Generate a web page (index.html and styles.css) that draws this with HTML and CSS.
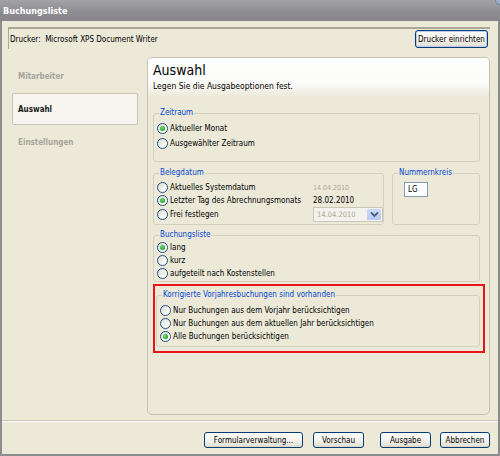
FILE: index.html
```html
<!DOCTYPE html>
<html lang="de">
<head>
<meta charset="utf-8">
<title>Buchungsliste</title>
<link rel="stylesheet" href="styles.css">
</head>
<body>
<div class="window">
  <div class="titlebar"><span class="title">Buchungsliste</span><span class="corner"></span></div>
  <div class="frame">
    <div class="printer-bar">
      <span class="printer-label">Drucker:&nbsp;&nbsp;Microsoft XPS Document Writer</span>
      <button class="btn btn-setup">Drucker einrichten</button>
    </div>
    <div class="main">
      <nav class="nav">
        <div class="nav-item">Mitarbeiter</div>
        <div class="nav-item active">Auswahl</div>
        <div class="nav-item">Einstellungen</div>
      </nav>
      <section class="panel">
        <header class="panel-head">
          <h1>Auswahl</h1>
          <p>Legen Sie die Ausgabeoptionen fest.</p>
        </header>
        <div class="panel-body">
          <fieldset class="group g-zeitraum">
            <legend>Zeitraum</legend>
            <div class="opt"><span class="radio on"></span>Aktueller Monat</div>
            <div class="opt"><span class="radio"></span>Ausgewählter Zeitraum</div>
          </fieldset>

          <div class="split">
            <fieldset class="group g-beleg">
              <legend>Belegdatum</legend>
              <div class="dates">
                <div class="opt"><span class="radio"></span>Aktuelles Systemdatum</div>
                <div class="date dim">14.04.2010</div>
                <div class="opt"><span class="radio on"></span>Letzter Tag des Abrechnungsmonats</div>
                <div class="date">28.02.2010</div>
                <div class="opt"><span class="radio"></span>Frei festlegen</div>
                <div class="combo">
                  <span class="combo-text">14.04.2010</span>
                  <span class="combo-btn"><svg width="9" height="7" viewBox="0 0 9 7"><path d="M1 1.5 L4.5 5 L8 1.5" fill="none" stroke="#4d6185" stroke-width="1.8"/></svg></span>
                </div>
              </div>
            </fieldset>
            <fieldset class="group g-nummer">
              <legend>Nummernkreis</legend>
              <div class="textbox">LG</div>
            </fieldset>
          </div>

          <fieldset class="group g-liste">
            <legend>Buchungsliste</legend>
            <div class="opt"><span class="radio on"></span>lang</div>
            <div class="opt"><span class="radio"></span>kurz</div>
            <div class="opt"><span class="radio"></span>aufgeteilt nach Kostenstellen</div>
          </fieldset>

          <div class="highlight">
            <fieldset class="group g-korr">
              <legend>Korrigierte Vorjahresbuchungen sind vorhanden</legend>
              <div class="opt"><span class="radio"></span>Nur Buchungen aus dem Vorjahr berücksichtigen</div>
              <div class="opt"><span class="radio"></span>Nur Buchungen aus dem aktuellen Jahr berücksichtigen</div>
              <div class="opt"><span class="radio on"></span>Alle Buchungen berücksichtigen</div>
            </fieldset>
          </div>
        </div>
      </section>
    </div>
    <div class="footer">
      <button class="btn b-form">Formularverwaltung...</button>
      <button class="btn b-vor">Vorschau</button>
      <button class="btn b-aus">Ausgabe</button>
      <button class="btn b-abb">Abbrechen</button>
    </div>
  </div>
</div>
</body>
</html>
```

FILE: styles.css
```css
* { box-sizing: border-box; }
html, body { margin: 0; padding: 0; }
body {
  width: 500px;
  height: 456px;
  overflow: hidden;
  background: #ece9d8;
  font-family: "DejaVu Sans Condensed", "DejaVu Sans", sans-serif;
  font-stretch: condensed;
  font-size: 8px;
  color: #000;
}
.window { width: 500px; height: 456px; display: flex; flex-direction: column; }

.titlebar {
  height: 21px;
  flex: none;
  display: flex;
  align-items: center;
  justify-content: space-between;
  padding-left: 3px;
  background: linear-gradient(#a3a3a7, #8d8d91 60%, #86868a);
  color: #fff;
  font-family: "DejaVu Sans", sans-serif;
  font-stretch: condensed;
  font-weight: bold;
  font-size: 9px;
  position: relative;
}
.corner {
  position: absolute;
  right: -4px;
  top: -4px;
  width: 9px;
  height: 9px;
  border-radius: 50%;
  background: #9fb0c8;
  border: 1px solid #6f7f98;
}

.frame {
  flex: 1;
  display: flex;
  flex-direction: column;
  border: 2px solid #8c8c8c;
  border-top: 0;
}

.printer-bar {
  flex: none;
  margin: 6px 8px 0 6px;
  height: 22px;
  border-top: 2px solid #aca899;
  border-left: 1px solid #aca899;
  display: flex;
  align-items: center;
  justify-content: space-between;
  padding: 0 2px 0 1px;
}

.btn {
  font: inherit;
  font-family: "DejaVu Sans Condensed", "DejaVu Sans", sans-serif;
  font-stretch: condensed;
  font-size: 8px;
  color: #000;
  height: 16px;
  padding: 0;
  border: 1px solid #003c74;
  border-radius: 3px;
  background: linear-gradient(#ffffff, #f5f4ef 45%, #e9e6db 85%, #d8d3c6);
}
.btn-setup {
  width: 73px;
  height: 18px;
  box-shadow: inset 0 0 0 1px #b9ccef;
}

.main {
  flex: 1;
  display: flex;
  padding: 8px 0 5px 0;
  min-height: 0;
}
.nav {
  width: 145px;
  flex: none;
  padding: 3px 9px 0 10px;
  display: flex;
  flex-direction: column;
  gap: 1px;
}
.nav-item {
  height: 32px;
  display: flex;
  align-items: center;
  padding-left: 6px;
  font-family: "DejaVu Sans", sans-serif;
  font-weight: bold;
  font-size: 8px;
  color: #a5a59b;
}
.nav-item.active {
  color: #1a1a1a;
  background: #f6f5f0;
  border: 1px solid #c9c6b6;
  border-radius: 2px;
  padding-left: 5px;
}

.panel {
  width: 343px;
  flex: none;
  border: 1px solid #c6c2b2;
  border-radius: 5px;
  display: flex;
  flex-direction: column;
}
.panel-head {
  height: 39px;
  flex: none;
  padding: 4px 0 0 5px;
  border-radius: 4px 4px 0 0;
  background: linear-gradient(#ffffff, #fbfbf9 65%, #ece9d8);
}
.panel-head h1 {
  margin: 0;
  font-family: "DejaVu Sans", sans-serif;
  font-weight: normal;
  font-size: 14px;
  line-height: 16px;
  color: #000;
}
.panel-head p {
  margin: 3px 0 0 0;
  font-family: "DejaVu Sans", sans-serif;
  font-size: 8.5px;
  line-height: 11px;
}

.panel-body { padding: 10px 4px 0 5px; }

.group {
  margin: 0 5px 0 0;
  padding: 0 3px;
  border: 1px solid #d3d0be;
  border-radius: 3px;
  min-width: 0;
}
.group legend {
  padding: 0 1px;
  margin-left: 2px;
  color: #0046d5;
  line-height: 12px;
}

.opt {
  display: flex;
  align-items: center;
  height: 13px;
  white-space: nowrap;
}
.radio {
  width: 11px;
  height: 11px;
  flex: none;
  margin-right: 2px;
  border: 1px solid #1c5180;
  border-radius: 50%;
  background: linear-gradient(135deg, #d9d8cf, #f6f6f2 60%, #ffffff);
  display: flex;
  align-items: center;
  justify-content: center;
}
.radio.on::after {
  content: "";
  width: 5px;
  height: 5px;
  border-radius: 50%;
  background: radial-gradient(circle at 40% 40%, #7fd77f, #21a121 70%);
}

.g-zeitraum { padding-top: 2px; padding-bottom: 10px; }
.g-zeitraum .opt { height: 15px; }

.split {
  display: grid;
  grid-template-columns: 231px 88px;
  column-gap: 8px;
  margin-top: 5px;
}
.split .group { margin-right: 0; }
.g-beleg { padding: 0 0 0 3px; }
.dates {
  display: grid;
  grid-template-columns: 156px 70px;
  grid-template-rows: 13px 13px 15px;
  padding: 2px 0 2px 0;
  align-items: center;
}
.date { white-space: nowrap; }
.date.dim { color: #aca899; font-size: 7px; }
.combo {
  width: 70px;
  height: 15px;
  display: flex;
  align-items: stretch;
  border: 1px solid #c9c7ba;
  background: #f3f2ec;
  color: #aca899;
  font-size: 7.5px;
}
.combo-text { padding-left: 3px; display: flex; align-items: center; }
.combo-btn {
  width: 14px;
  margin: 1px 1px 1px auto;
  background: linear-gradient(#d0dcf8, #b6c9f2);
  border-radius: 1px;
  display: flex;
  align-items: center;
  justify-content: center;
}

.g-nummer { padding: 0 3px; }
.textbox {
  width: 24px;
  height: 15px;
  margin: 3px 0 0 8px;
  border: 1px solid #7f9db9;
  background: #fff;
  padding-left: 3px;
  display: flex;
  align-items: center;
}

.g-liste { margin-top: 4px; padding-bottom: 1px; }

.highlight {
  margin-top: 2px;
  border: 2px solid #e8141b;
  padding: 3px 3px 4px 1px;
}
.g-korr { margin-right: 0; padding-top: 3px; padding-bottom: 3px; }

.footer {
  height: 34px;
  flex: none;
  border-top: 1px solid #c5c2b2;
  box-shadow: inset 0 1px 0 #ffffff;
  display: flex;
  justify-content: flex-end;
  align-items: flex-start;
  padding: 11px 8px 0 0;
}
.b-form { width: 99px; margin-right: 10px; }
.b-vor { width: 51px; margin-right: 16px; }
.b-aus { width: 51px; margin-right: 9px; }
.b-abb { width: 50px; }
```
